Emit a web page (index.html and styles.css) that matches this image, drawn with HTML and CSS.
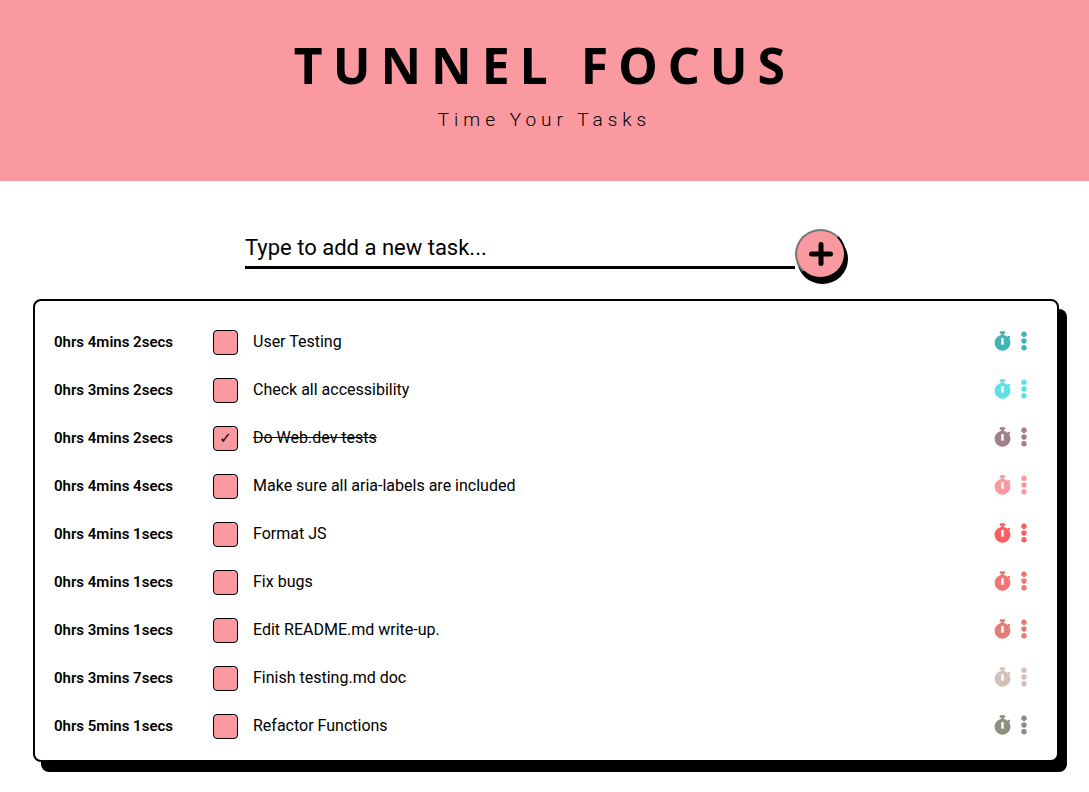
FILE: index.html
```
<!DOCTYPE html>
<html lang="en">
<head>
<meta charset="utf-8">
<title>Tunnel Focus</title>
<meta name="viewport" content="width=device-width, initial-scale=1">
<link rel="stylesheet" href="styles.css">
</head>
<body>
<svg class="sprite" aria-hidden="true">
  <symbol id="stopwatch" viewBox="0 0 448 512"><path d="M432 304c0 114.9-93.1 208-208 208S16 418.9 16 304c0-104 76.3-190.2 176-205.5V64h-28c-6.6 0-12-5.4-12-12V12c0-6.6 5.4-12 12-12h120c6.6 0 12 5.4 12 12v40c0 6.6-5.4 12-12 12h-28v34.5c37.500 5.800 71.700 21.600 99.700 44.600l27.500-27.500c4.700-4.700 12.300-4.700 17 0l28.300 28.300c4.700 4.700 4.700 12.300 0 17l-29.400 29.400-.6.6C419.700 223.300 432 262.200 432 304zm-176 36V188.500c0-6.600-5.400-12-12-12h-40c-6.600 0-12 5.400-12 12V340c0 6.600 5.400 12 12 12h40c6.600 0 12-5.400 12-12z"/></symbol>
  <symbol id="dots" viewBox="0 0 6 20"><circle cx="3" cy="3.300" r="2.700"/><circle cx="3" cy="10" r="2.700"/><circle cx="3" cy="16.700" r="2.700"/></symbol>
</svg>
<header class="banner">
  <h1 class="title">TUNNEL FOCUS</h1>
  <p class="tagline">Time Your Tasks</p>
</header>
<main>
  <form class="new-task">
    <input class="new-task-input" type="text" aria-label="New task" placeholder="Type to add a new task...">
    <button class="add" type="button" aria-label="Add task">
      <svg class="plus" viewBox="0 0 24 24" aria-hidden="true"><path d="M12 2.500v19M2.500 12h19" stroke="#000" stroke-width="5" stroke-linecap="round"/></svg>
    </button>
  </form>
  <ul class="tasks" id="tasks"></ul>
</main>
<script src="app.js"></script>
</body>
</html>
```
FILE: styles.css
```
* { box-sizing: border-box; }

body {
  margin: 0;
  background: #fff;
  color: #000;
  font-family: Roboto, "Liberation Sans", sans-serif;
  font-size: 16px;
}

.sprite { display: none; }

.banner {
  padding: 30px 16px 46px;
  background: #fa999f;
  text-align: center;
}

.title {
  margin: 0;
  font-family: "Noto Sans", "Open Sans", sans-serif;
  font-size: 50px;
  font-weight: 700;
  line-height: 70px;
  letter-spacing: 10px;
}

.tagline {
  margin: 0;
  padding-top: 5px;
  font-size: 19px;
  font-weight: 300;
  line-height: 30px;
  letter-spacing: 5px;
}

.new-task {
  display: flex;
  justify-content: center;
  padding: 48px 16px 0 18px;
}

.new-task-input {
  width: 550px;
  min-width: 0;
  height: 40px;
  padding: 0;
  border: 0;
  border-bottom: 3px solid #000;
  background: none;
  color: #000;
  font: inherit;
  font-size: 22px;
}

.new-task-input::placeholder { color: #000; opacity: 1; }

.add {
  display: flex;
  flex: none;
  align-items: center;
  justify-content: center;
  width: 51px;
  height: 50px;
  padding: 0;
  border: 2px solid;
  border-color: #767676 #000 #000 #767676;
  border-radius: 50%;
  background: #fa999f;
  box-shadow: 2px 5px 0 #000;
}

.plus { width: 24px; height: 24px; }

.tasks {
  margin: 20px 30px 30px 33px;
  padding: 17px 30px 10px 19px;
  border: 2px solid #000;
  border-radius: 8px;
  background: #fff;
  box-shadow: 8px 10px 0 #000;
  list-style: none;
}

.task {
  display: flex;
  align-items: center;
  height: 48px;
}

.time {
  flex: none;
  width: 159px;
  font-size: 15px;
  font-weight: 600;
}

.check {
  display: grid;
  flex: none;
  place-items: center;
  width: 25px;
  height: 25px;
  margin: 0 15px 0 0;
  border: 1px solid #000;
  border-radius: 4px;
  background: #fa999f;
  appearance: none;
}

.check:checked::before {
  content: "✓";
  font: 700 15px "DejaVu Sans", sans-serif;
}

.name {
  flex: 1;
  padding-bottom: 2px;
}

.check:checked + .name { text-decoration: line-through; }

.icon {
  display: flex;
  padding: 0 0 2px;
  border: 0;
  background: none;
  color: inherit;
}

.icon + .icon { margin-left: 10px; }

.icon svg { fill: currentColor; }
.watch { width: 17px; height: 20px; }
.more { width: 6px; height: 20px; }
```
FILE: app.js
```
const tasks = [
  ["0hrs 4mins 2secs", "User Testing", "#42b4b4"],
  ["0hrs 3mins 2secs", "Check all accessibility", "#5fe0e2"],
  ["0hrs 4mins 2secs", "Do Web.dev tests", "#a07f87", true],
  ["0hrs 4mins 4secs", "Make sure all aria-labels are included", "#fa999f"],
  ["0hrs 4mins 1secs", "Format JS", "#f85f65"],
  ["0hrs 4mins 1secs", "Fix bugs", "#ef7675"],
  ["0hrs 3mins 1secs", "Edit README.md write-up.", "#e37d78"],
  ["0hrs 3mins 7secs", "Finish testing.md doc", "#d2c1b9"],
  ["0hrs 5mins 1secs", "Refactor Functions", "#8d8d80"]
];

document.getElementById("tasks").innerHTML = tasks.map(([time, name, color, done], i) => `
  <li class="task">
    <span class="time">${time}</span>
    <input class="check" type="checkbox" id="task-${i}"${done ? " checked" : ""}>
    <label class="name" for="task-${i}">${name}</label>
    <button class="icon" type="button" aria-label="Start timer" style="color:${color}"><svg class="watch"><use href="#stopwatch"/></svg></button>
    <button class="icon" type="button" aria-label="Task options" style="color:${color}"><svg class="more"><use href="#dots"/></svg></button>
  </li>`).join("");
```
